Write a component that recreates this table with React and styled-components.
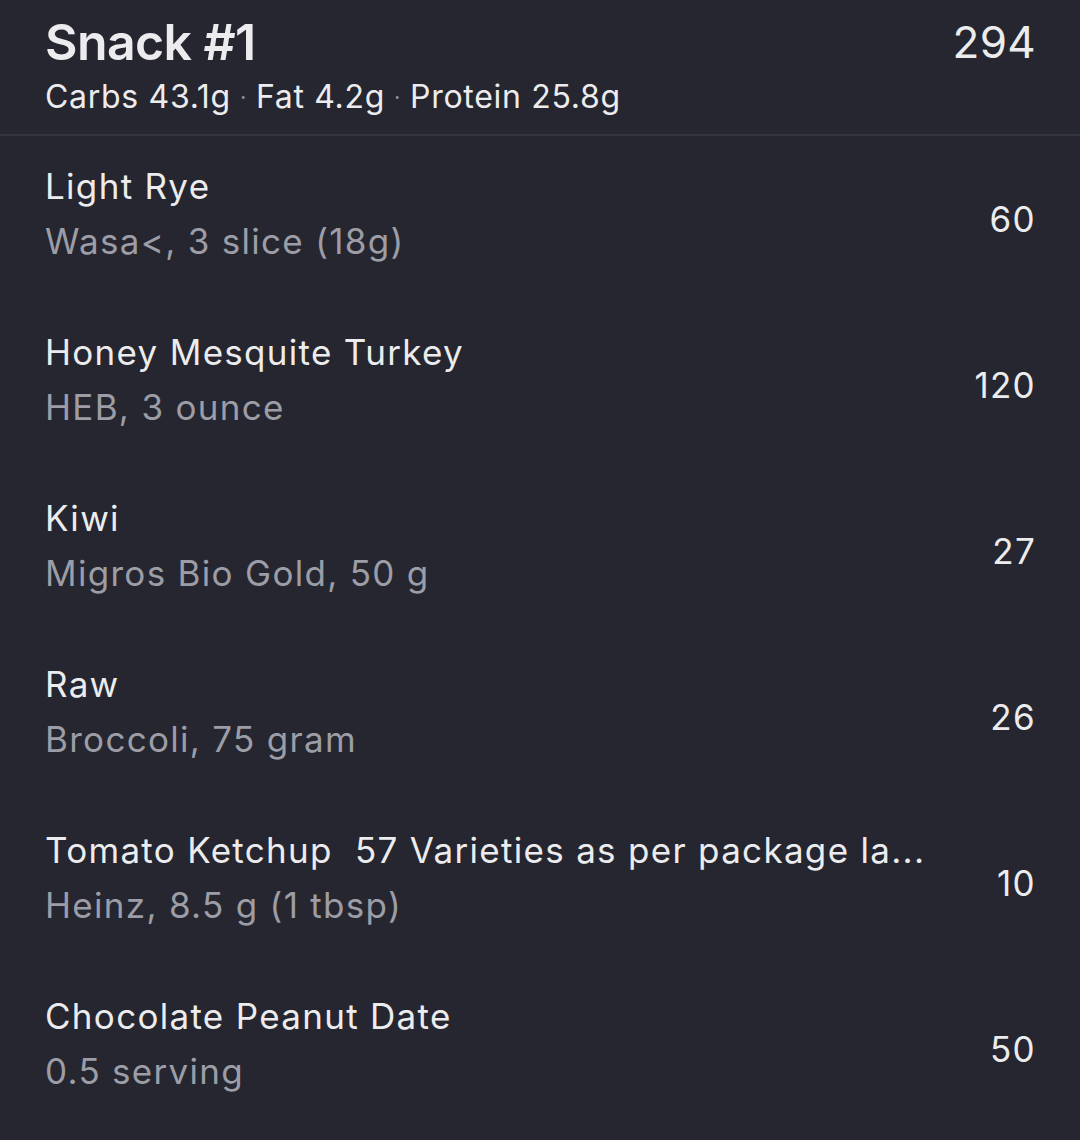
import React from "react";
import styled, { createGlobalStyle } from "styled-components";

const Global = createGlobalStyle`
  html, body { margin: 0; padding: 0; background: #25262f; }
  body { font-family: Inter, "Noto Sans", sans-serif; -webkit-font-smoothing: antialiased; }
`;

const Screen = styled.div`
  width: 1080px;
  height: 1140px;
  background: #25262f;
  color: #ececee;
  overflow: hidden;
`;

const Header = styled.header`
  display: flex;
  justify-content: space-between;
  align-items: flex-start;
  height: 136px;
  box-sizing: border-box;
  padding: 12px 44px 0 45px;
  border-bottom: 2px solid #33353e;
`;

const TitleBlock = styled.div`
  display: flex;
  flex-direction: column;
`;

const Title = styled.h1`
  margin: 0;
  font-size: 50px;
  line-height: 60px;
  font-weight: 600;
  letter-spacing: -0.6px;
  color: #ececee;
`;

const Macros = styled.div`
  font-size: 32px;
  line-height: 50px;
  letter-spacing: 0.7px;
  color: #ececee;
`;

const Dot = styled.span`
  color: #8f9099;
  font-size: 22px;
  margin: 0 9px;
  vertical-align: 3px;
`;

const Total = styled.div`
  font-size: 44px;
  line-height: 60px;
  font-weight: 400;
  letter-spacing: 0.3px;
`;

const List = styled.ul`
  list-style: none;
  margin: 0;
  padding: 0;
`;

const Row = styled.li`
  display: flex;
  align-items: center;
  justify-content: space-between;
  height: 166px;
  padding: 0 44px 0 45px;
  box-sizing: border-box;
`;

const Info = styled.div`
  display: flex;
  flex-direction: column;
  gap: 13px;
  padding-bottom: 11px;
  min-width: 0;
`;

const Name = styled.div`
  font-size: 35px;
  line-height: 42px;
  letter-spacing: 1.3px;
  color: #ececee;
  white-space: pre;
`;

const Detail = styled.div`
  font-size: 35px;
  line-height: 42px;
  letter-spacing: 1.3px;
  color: #9c9da6;
  white-space: nowrap;
`;

const Calories = styled.div`
  font-size: 35px;
  line-height: 42px;
  letter-spacing: 1.3px;
  color: #ececee;
  flex-shrink: 0;
`;

const items = [
  { name: "Light Rye", detail: "Wasa<, 3 slice (18g)", cal: 60 },
  { name: "Honey Mesquite Turkey", detail: "HEB, 3 ounce", cal: 120 },
  { name: "Kiwi", detail: "Migros Bio Gold, 50 g", cal: 27 },
  { name: "Raw", detail: "Broccoli, 75 gram", cal: 26 },
  { name: "Tomato Ketchup  57 Varieties as per package la...", detail: "Heinz, 8.5 g (1 tbsp)", cal: 10 },
  { name: "Chocolate Peanut Date", detail: "0.5 serving", cal: 50 },
];

export default function App() {
  return (
    <Screen>
      <Global />
      <Header>
        <TitleBlock>
          <Title>Snack #1</Title>
          <Macros>
            Carbs 43.1g<Dot>·</Dot>Fat 4.2g<Dot>·</Dot>Protein 25.8g
          </Macros>
        </TitleBlock>
        <Total>294</Total>
      </Header>
      <List>
        {items.map((it) => (
          <Row key={it.name}>
            <Info>
              <Name>{it.name}</Name>
              <Detail>{it.detail}</Detail>
            </Info>
            <Calories>{it.cal}</Calories>
          </Row>
        ))}
      </List>
    </Screen>
  );
}
